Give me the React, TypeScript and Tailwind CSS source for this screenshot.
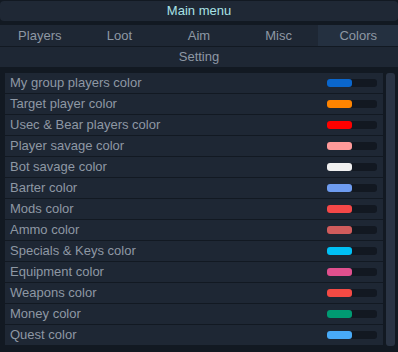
import React from "react"

const tabs = ["Players", "Loot", "Aim", "Misc", "Colors"]

const rows: { label: string; color: string }[] = [
  { label: "My group players color", color: "#0a66cc" },
  { label: "Target player color", color: "#ff8400" },
  { label: "Usec & Bear players color", color: "#ff0000" },
  { label: "Player savage color", color: "#ff9a9a" },
  { label: "Bot savage color", color: "#f0f0f0" },
  { label: "Barter color", color: "#6e9cf0" },
  { label: "Mods color", color: "#f44848" },
  { label: "Ammo color", color: "#d05c5c" },
  { label: "Specials & Keys color", color: "#00c0f5" },
  { label: "Equipment color", color: "#e0508e" },
  { label: "Weapons color", color: "#f44a44" },
  { label: "Money color", color: "#009a72" },
  { label: "Quest color", color: "#48aaf8" },
]

export default function App() {
  return (
    <div className="w-[398px] h-[352px] bg-[#121922] overflow-hidden flex flex-col font-['Liberation_Sans',sans-serif] text-[13px] text-[#8e98a4]">
      <div className="mt-px h-[20px] rounded-[4px] bg-[#1f2835] flex items-center justify-center text-[#a9e2e6]">
        Main menu
      </div>
      <div className="mt-[4px] h-[21px] grid grid-cols-5 bg-[#1e2734]">
        {tabs.map((t) => (
          <div
            key={t}
            className={
              "flex items-center justify-center " + (t === "Colors" ? "bg-[#243040]" : "")
            }
          >
            {t}
          </div>
        ))}
      </div>
      <div className="mt-px h-[20px] bg-[#1e2734] flex items-center justify-center">Setting</div>
      <div className="mt-[6px] flex pl-[5px] pr-[3px] gap-[3px]">
        <div className="flex-1 flex flex-col gap-px">
          {rows.map((r) => (
            <div key={r.label} className="h-[20px] bg-[#1e2734] flex items-center pl-[5px] pr-[6px]">
              <span className="flex-1">{r.label}</span>
              <div className="w-[50px] h-[8px] rounded-[3px] bg-[#121821] flex">
                <div className="w-[25px] h-full rounded-[3px]" style={{ background: r.color }} />
              </div>
            </div>
          ))}
        </div>
        <div className="w-[9px] h-[273px] rounded-[3px] bg-[#2a3444]" />
      </div>
    </div>
  )
}
